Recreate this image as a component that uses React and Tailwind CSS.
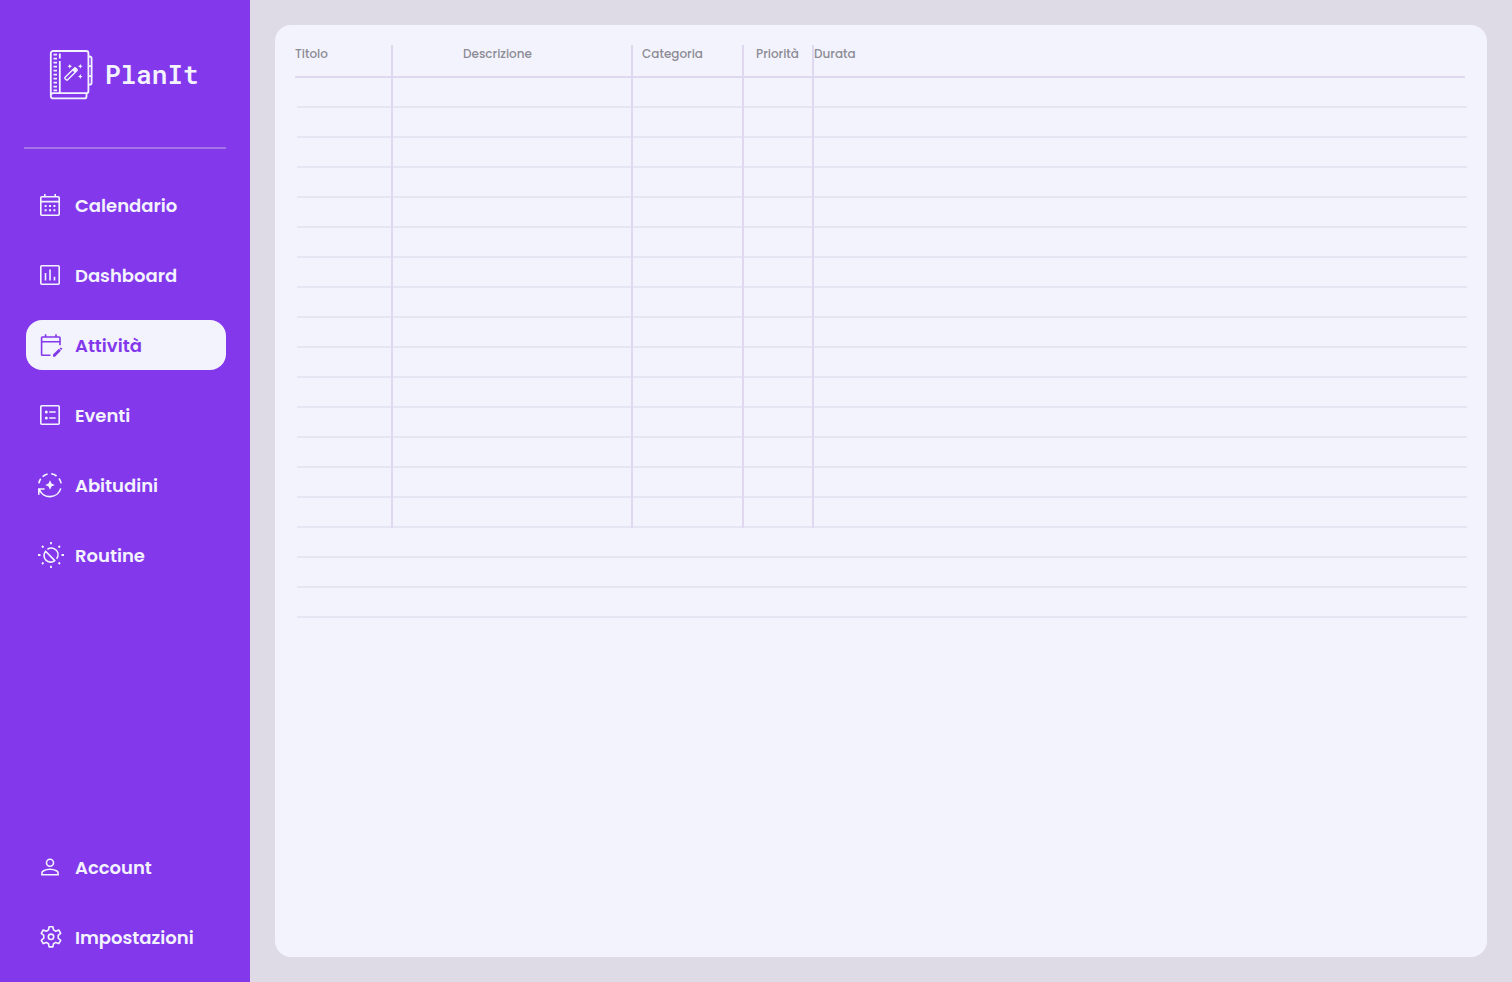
import React from "react";

function Icon({ children }) {
  return (
    <svg
      viewBox="0 0 24 24"
      className="size-6 shrink-0 overflow-visible"
      fill="none"
      stroke="currentColor"
      strokeWidth="1.6"
      aria-hidden="true"
    >
      {children}
    </svg>
  );
}

function CalendarIcon() {
  return (
    <Icon>
      <rect x="2.8" y="3.8" width="18.4" height="18.4" rx="1" />
      <path d="M2.8 8.6h18.4M6.8 1v3M17.2 1v3" />
      <path strokeWidth="2" d="M6.6 13h2M11 13h2M15.4 13h2M6.6 17.2h2M11 17.2h2M15.4 17.2h2" />
    </Icon>
  );
}

function ChartIcon() {
  return (
    <Icon>
      <rect x="2.8" y="2.8" width="18.4" height="18.4" rx="1" />
      <path d="M7.5 10v7.5M12 6.5v11M16.5 13.7v3.8" />
    </Icon>
  );
}

function EditCalendarIcon() {
  return (
    <Icon>
      <path d="M12.5 22.3H4.4a.8.8 0 0 1-.8-.8V4.8a.8.8 0 0 1 .8-.8h16.800a.8.8 0 0 1 .8.8v7.400M3.600 8.800H22M7.600 1.200V4M18 1.200V4" />
      <path fill="currentColor" stroke="none" d="M15 23.700v-2.100l5.900-5.900 2 2-5.900 6zM22.500 14.400l2 1.100-1.100 1.600-1.900-1.600z" />
    </Icon>
  );
}

function ListIcon() {
  return (
    <Icon>
      <rect x="2.8" y="2.8" width="18.4" height="18.4" rx="1" />
      <path d="M11.2 9h6.5M11.2 15h6.5" />
      <g fill="currentColor" stroke="none">
        <circle cx="8.3" cy="9" r="1.5" />
        <circle cx="8.3" cy="15" r="1.5" />
      </g>
    </Icon>
  );
}

function HabitIcon() {
  return (
    <Icon>
      <path d="M.8 21.8V16h5.8M1.3 16.2A11.3 11.3 0 0 0 22.8 15.4" />
      <path d="M.9 10.4A11.3 11.3 0 0 1 2.7 5.8M4.6 3.6A11.3 11.3 0 0 1 9.6 1M13.2.8A11.3 11.3 0 0 1 18.6 3M21 5.4A11.3 11.3 0 0 1 23.2 10.3" />
      <path fill="currentColor" stroke="none" d="m12 7.3 1.5 3.2 3.2 1.5-3.2 1.5-1.5 3.2-1.5-3.2L7.3 12l3.2-1.5z" />
    </Icon>
  );
}

function RoutineIcon() {
  return (
    <Icon>
      <path d="M9.400 6.400A6.600 6.600 0 0 1 18.600 15.700" />
      <path strokeLinejoin="round" d="M7.600 8.200A6.600 6.600 0 0 0 16.800 17.600Z" />
      <path
        strokeWidth="1.8"
        d="M13-1v2.200M13 22.800V25M0 12h2.500M23.500 12H26M4 3l1.500 1.500M20.500 19.500 22 21M4 21l1.500-1.500M20.500 4.500 22 3"
      />
    </Icon>
  );
}

function AccountIcon() {
  return (
    <Icon>
      <circle cx="12" cy="7.800" r="3.500" />
      <path d="M3.900 19.700v-1.500c0-1.200.6-2 1.700-2.500 4.200-1.900 8.600-1.900 12.800 0 1.100.5 1.700 1.300 1.700 2.500v1.500z" />
    </Icon>
  );
}

function SettingsIcon() {
  return (
    <Icon>
      <path
        strokeLinejoin="round"
        d="M11.100 1.700h3.800l.6 3.200 2.200 1.300 3.100-1.200 1.900 3.300-2.500 2.100v2.800l2.500 2.100-1.900 3.300-3.100-1.200-2.200 1.300-.6 3.200h-3.800l-.6-3.200-2.200-1.300-3.100 1.200-1.900-3.300 2.500-2.100v-2.800L3.300 8.300 5.200 5l3.100 1.200 2.200-1.300z"
      />
      <circle cx="13" cy="11.800" r="2.700" />
    </Icon>
  );
}

function Logo() {
  return (
    <svg viewBox="0 0 44 50" className="h-[50px] w-11 shrink-0" fill="none" stroke="currentColor" strokeWidth="1.800" aria-hidden="true">
      <path d="M1.800 46V3.300A2.300 2.300 0 0 1 4.100 1h33a2.300 2.300 0 0 1 2.300 2.300v37.900a2 2 0 0 1-2 2H4.300a2.500 2.500 0 0 0-2.500 2.500v.2a2.500 2.500 0 0 0 2.500 2.500h31.200a2 2 0 0 0 2-2v-3.200" />
      <path d="M10.800 3.500v5M10.800 11v32" />
      <path d="M4.500 4.600H8M4.500 8.600H8M4.500 12.600H8M4.500 16.600H8M4.500 20.600H8M4.500 24.600H8M4.500 28.600H8M4.500 32.600H8M4.500 36.600H8M4.500 40.300H8" />
      <path d="M39.400 6.500h1.200a2 2 0 0 1 2 2v7.600h-3.200M42.600 16.100v10h-3.200M42.600 26.100v6.600a2 2 0 0 1-2 2h-1.200" />
      <g transform="rotate(45 22 24)">
        <rect x="20.200" y="16.500" width="3.600" height="15" rx="1" strokeWidth="1.400" />
        <rect x="20.200" y="16.500" width="3.600" height="4" fill="currentColor" stroke="none" />
      </g>
      <path
        fill="currentColor"
        stroke="none"
        d="m20.800 13.900.7 1.700 1.700.7-1.700.7-.7 1.700-.7-1.700-1.700-.7 1.700-.7zM31.300 13.900l.7 1.700 1.700.7-1.700.7-.7 1.700-.7-1.700-1.700-.7 1.700-.7zM31.300 24.100l.7 1.700 1.700.7-1.700.7-.7 1.700-.7-1.700-1.700-.7 1.700-.7z"
      />
    </svg>
  );
}

const mainLinks = [
  { label: "Calendario", icon: CalendarIcon },
  { label: "Dashboard", icon: ChartIcon },
  { label: "Attività", icon: EditCalendarIcon, active: true },
  { label: "Eventi", icon: ListIcon },
  { label: "Abitudini", icon: HabitIcon },
  { label: "Routine", icon: RoutineIcon },
];

const accountLinks = [
  { label: "Account", icon: AccountIcon },
  { label: "Impostazioni", icon: SettingsIcon },
];

function NavList({ links }) {
  return (
    <ul className="flex flex-col gap-5">
      {links.map(({ label, icon: ItemIcon, active }) => (
        <li key={label}>
          <a
            href="#"
            aria-current={active ? "page" : undefined}
            className={
              active
                ? "flex h-[50px] items-center gap-[13px] rounded-2xl bg-[#f3f3fe] px-3 text-[#8338ec]"
                : "flex h-[50px] items-center gap-[13px] rounded-2xl px-3"
            }
          >
            <ItemIcon />
            <span className="pt-px">{label}</span>
          </a>
        </li>
      ))}
    </ul>
  );
}

function Sidebar() {
  return (
    <aside className="flex w-[250px] shrink-0 flex-col bg-[#8338ec] px-6 text-[#f3f3fe]">
      <div className="flex h-[149px] items-center gap-3 border-b-2 border-[#a673e6] pt-0.5 pl-[25px]">
        <Logo />
        <span className="font-['Roboto_Mono','Liberation_Mono',monospace] text-[26px] font-semibold">PlanIt</span>
      </div>
      <nav aria-label="Menu" className="flex flex-1 flex-col justify-between pt-[31px] pb-5 pl-0.5 text-lg font-semibold">
        <NavList links={mainLinks} />
        <NavList links={accountLinks} />
      </nav>
    </aside>
  );
}

const columns = [
  { label: "Titolo", cell: "w-[98px] border-r-2", text: "" },
  { label: "Descrizione", cell: "w-[240px] border-r-2", text: "pl-[70px]" },
  { label: "Categoria", cell: "w-[111px] border-r-2", text: "pl-[9px]" },
  { label: "Priorità", cell: "w-[70px] border-r-2", text: "pl-3" },
  { label: "Durata", cell: "pr-0.5", text: "" },
];

const ruledRows = Array.from({ length: 15 }, (_, i) => i);
const openRows = Array.from({ length: 3 }, (_, i) => i);

function ActivityTable() {
  return (
    <table className="w-full table-fixed border-separate border-spacing-0 text-left text-xs text-[#8c8c94]">
      <thead>
        <tr>
          {columns.map(({ label, cell, text }) => (
            <th key={label} scope="col" className={`border-[#dfd8ef] p-0 font-medium ${cell}`}>
              <div className={`h-[33px] border-b-2 border-[#dfd8ef] leading-[18px] ${text}`}>{label}</div>
            </th>
          ))}
        </tr>
      </thead>
      <tbody>
        {ruledRows.map((row) => (
          <tr key={row}>
            {columns.map(({ label }, i) => (
              <td
                key={label}
                className={`border-[#dfd8ef] p-0 ${i === 0 ? "pl-0.5" : ""} ${i < 4 ? "border-r-2" : ""}`}
              >
                <div className="h-[30px] border-b-2 border-[#e7e5f4]" />
              </td>
            ))}
          </tr>
        ))}
        {openRows.map((row) => (
          <tr key={row}>
            <td colSpan={5} className="p-0 pl-0.5">
              <div className="h-[30px] border-b-2 border-[#e7e5f4]" />
            </td>
          </tr>
        ))}
      </tbody>
    </table>
  );
}

export default function App() {
  return (
    <div className="flex min-h-screen bg-[#dedbe6] font-['Poppins','Inter',sans-serif]">
      <Sidebar />
      <main className="flex min-w-0 flex-1 p-[25px]">
        <section aria-label="Attività" className="min-w-0 flex-1 rounded-2xl bg-[#f3f3fe] p-5">
          <ActivityTable />
        </section>
      </main>
    </div>
  );
}
